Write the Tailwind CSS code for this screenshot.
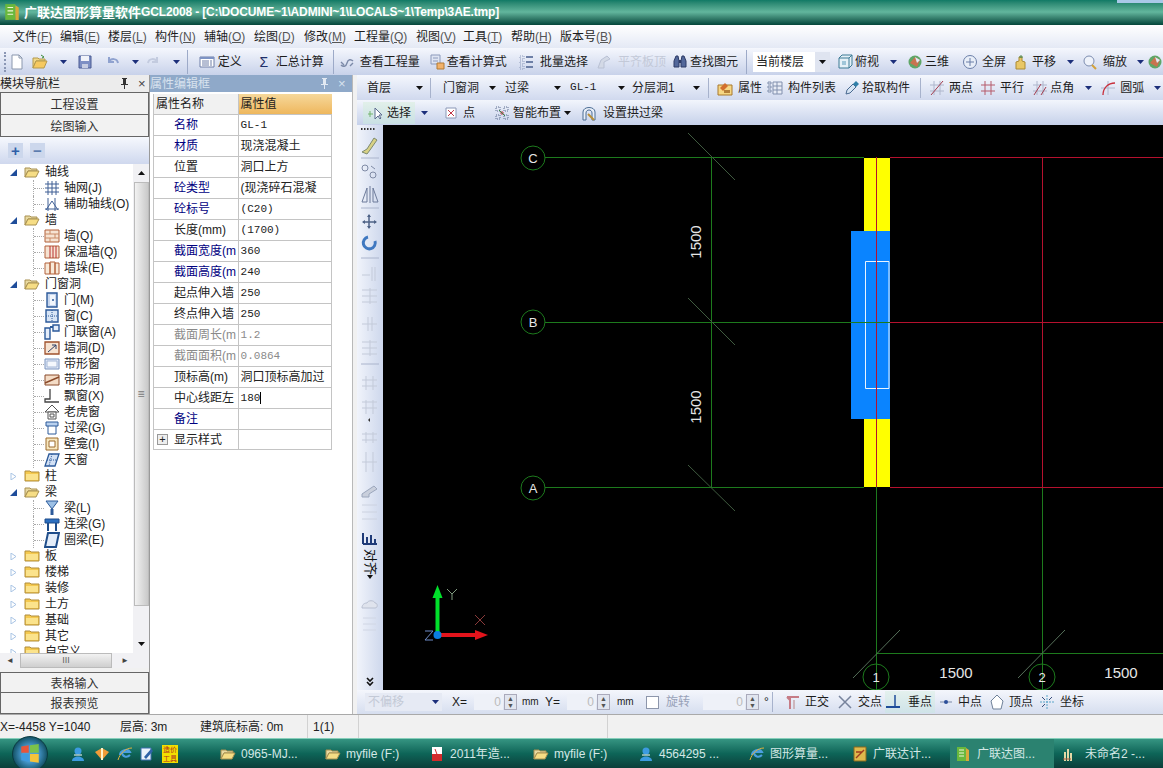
<!DOCTYPE html>
<html lang="zh-CN">
<head>
<meta charset="UTF-8">
<title>广联达图形算量软件GCL2008</title>
<script src="https://cdn.jsdelivr.net/npm/@tailwindcss/browser@4"></script>
</head>
<body class="bg-[#ece9d8]">
<!-- shared icons -->
<svg class="hidden">
  <symbol id="dn" viewBox="0 0 7 4"><path d="M0 0h7L3.5 4z" fill="#1c2f7a"/></symbol>
  <symbol id="dk" viewBox="0 0 7 4"><path d="M0 0h7L3.5 4z" fill="#111"/></symbol>
  <symbol id="pin" viewBox="0 0 9 11"><path d="M2 0h5v1H6v5h2v1H5v4H4V7H1V6h2V1H2z" fill="currentColor"/></symbol>
  <symbol id="fo" viewBox="0 0 16 16"><path d="M1 4h5l1 1h6v2H4L1 13z" fill="#e8d9a0" stroke="#a89050"/><path d="M4 7h11l-3 6H1z" fill="#f6dd85" stroke="#a89050"/></symbol>
  <symbol id="fc" viewBox="0 0 16 16"><path d="M1 3h5l1 1h8v9H1z" fill="#f5c94f" stroke="#b08d3c"/><path d="M2 6h12v6H2z" fill="#fbe38c"/></symbol>
  <symbol id="doc" viewBox="0 0 16 16"><path d="M3 1h7l3 3v11H3z" fill="#fff" stroke="#8a97ad"/><path d="M10 1v3h3" fill="none" stroke="#8a97ad"/></symbol>
  <symbol id="open" viewBox="0 0 16 16"><path d="M1 4h5l1 1h6v2H4L1 14z" fill="#f0d889" stroke="#b59a4c"/><path d="M4 7h11l-3 7H1z" fill="#f6c960" stroke="#b59a4c"/><path d="M9 1l3 2-2 1" fill="none" stroke="#3a8a3a"/></symbol>
  <symbol id="save" viewBox="0 0 16 16"><path d="M2 2h12v12H2z" fill="#7d8fc4" stroke="#4a5a92"/><path d="M4 2h8v5H4z" fill="#f1f3fa"/><path d="M5 10h6v4H5z" fill="#c6cde2"/></symbol>
  <symbol id="undo" viewBox="0 0 16 16"><path d="M4 3v5h5M4 8c2-4 8-4 9 1" fill="none" stroke="#8fa2cf" stroke-width="2"/></symbol>
  <symbol id="redo" viewBox="0 0 16 16"><path d="M12 3v5H7M12 8C10 4 4 4 3 9" fill="none" stroke="#c3cbdf" stroke-width="2"/></symbol>
  <symbol id="def" viewBox="0 0 16 16"><path d="M1 3h14v10H1z" fill="#fff" stroke="#6e7fa8"/><path d="M1 3h14v2H1z" fill="#7d93c4"/><path d="M3 7h7M3 9h7M3 11h7M12 6v6" stroke="#6e7fa8"/></symbol>
  <symbol id="eye" viewBox="0 0 16 16"><path d="M2 11c2 2 5 2 6-2s4-4 6-2M2 8l3 3M11 12l3-3" fill="none" stroke="#7c8aa8" stroke-width="1.4"/></symbol>
  <symbol id="calc" viewBox="0 0 16 16"><path d="M2 1h9v9H2z" fill="#dfe5f3" stroke="#8c9abb"/><path d="M4 4h5M4 7h5" stroke="#8c9abb"/><path d="M8 9h7v6H8z" fill="#f2b26a" stroke="#b27a35"/></symbol>
  <symbol id="batch" viewBox="0 0 16 16"><path d="M2 2h4v3H2zM2 7h4v3H2zM2 12h4v3H2z" fill="none" stroke="#8c9abb" stroke-dasharray="1 1"/><path d="M8 3h7M8 8h7M8 13h7" stroke="#6d7fa6" stroke-width="2"/></symbol>
  <symbol id="flush" viewBox="0 0 16 16"><path d="M2 14l3-8 6-4 3 3-6 3v6z" fill="#d3d9e6" stroke="#b9c1d4"/></symbol>
  <symbol id="bino" viewBox="0 0 16 16"><path d="M2 7l2-5h2l1 5v6H2zM9 7l1-5h2l2 5v6H9z" fill="#52679a" stroke="#2c3a66"/><path d="M7 6h2v3H7z" fill="#2c3a66"/></symbol>
  <symbol id="top" viewBox="0 0 16 16"><path d="M2 4l3-3h10v10l-3 3H2z" fill="#e5f0f7" stroke="#3d7b95"/><path d="M2 4h10v10M12 4l3-3" fill="none" stroke="#3d7b95"/><path d="M5 7h4v4H5z" fill="#9fc5d8"/></symbol>
  <symbol id="d3" viewBox="0 0 16 16"><circle cx="8" cy="8" r="6.5" fill="#5fa667"/><path d="M3 9l5-6 5 3-3 7z" fill="#c9734f"/><path d="M8 3l5 3-3 3z" fill="#dfe9f5"/></symbol>
  <symbol id="full" viewBox="0 0 16 16"><circle cx="8" cy="8" r="6.5" fill="#e8eef8" stroke="#6b7fa8"/><path d="M8 4v8M4 8h8" stroke="#6b7fa8"/></symbol>
  <symbol id="pan" viewBox="0 0 16 16"><path d="M4 15V8l3-1V3h3v4l3 1v7z" fill="#e9c766" stroke="#ab8b36"/><path d="M9 1v3M7 3h4" stroke="#568a50"/></symbol>
  <symbol id="zoom" viewBox="0 0 16 16"><circle cx="7" cy="7" r="5" fill="#eef2fa" stroke="#7d8db0"/><path d="M10 11l4 4" stroke="#d4a23a" stroke-width="2"/></symbol>
  <symbol id="prop" viewBox="0 0 16 16"><path d="M1 5h14v10H1z" fill="#f6d784" stroke="#a8792c"/><path d="M3 8l5-5 3 3-5 5z" fill="#d26f2d"/><path d="M7 10h6v3H7z" fill="#b5803a"/></symbol>
  <symbol id="list" viewBox="0 0 16 16"><path d="M1 2h3v2H1zM1 6h3v2H1zM1 10h3v2H1zM6 2h9v12H6z" fill="#e8ecf5" stroke="#8190ae"/><path d="M6 6h9M6 10h9M10 2v12" stroke="#8190ae"/></symbol>
  <symbol id="pick" viewBox="0 0 16 16"><path d="M2 14l1-4 6-6 3 3-6 6z" fill="#d5e3f3" stroke="#49698f"/><path d="M9 4l3-3 3 3-3 3z" fill="#2f7fa8"/></symbol>
  <symbol id="two" viewBox="0 0 16 16"><path d="M1 5h14M1 11h14M5 1v14M11 1v14" stroke="#aeb6cc"/><path d="M2 15L14 1" stroke="#a33c4e"/></symbol>
  <symbol id="par" viewBox="0 0 16 16"><path d="M1 5h14M1 11h14M5 1v14M11 1v14" stroke="#b55a6a"/></symbol>
  <symbol id="ang" viewBox="0 0 16 16"><path d="M1 5h14M1 11h14M5 1v14M11 1v14" stroke="#aeb6cc"/><path d="M2 15L9 4M9 15l5-8" stroke="#a33c4e"/></symbol>
  <symbol id="arc" viewBox="0 0 16 16"><path d="M1 8h14M8 1v14" stroke="#aeb6cc"/><path d="M3 15C3 8 8 3 15 3" fill="none" stroke="#c8303c" stroke-width="1.4"/></symbol>
  <symbol id="sel" viewBox="0 0 16 16"><path d="M8 3v11l3-3 2 3 1-1-2-3h3z" fill="#fff" stroke="#5d6c8f"/><path d="M1 9h5M3 6v6" stroke="#74b36e"/></symbol>
  <symbol id="pt" viewBox="0 0 16 16"><path d="M3 3h10v10H3z" fill="#fff" stroke="#8b98b6"/><path d="M5 5l6 6M11 5l-6 6" stroke="#c03746"/></symbol>
  <symbol id="smart" viewBox="0 0 16 16"><path d="M2 2h4v4H2zM10 2h4v4h-4zM2 10h4v4H2zM10 10h4v4h-4z" fill="none" stroke="#5d6c8f" stroke-dasharray="1 1"/><path d="M6 8h4M8 6v4" stroke="#c03746"/><path d="M5 5l6 6" stroke="#3c8a48"/></symbol>
  <symbol id="arch" viewBox="0 0 16 16"><path d="M2 7C2 1 14 1 14 7v8h-3V8C11 4 5 4 5 8v7H2z" fill="#e9eff8" stroke="#4a6c93"/><path d="M7 9l6 6" stroke="#b8903a" stroke-width="2"/></symbol>
  <symbol id="ortho" viewBox="0 0 16 16"><path d="M2 3h12M5 3v12M2 3l3 3" fill="none" stroke="#c67c86" stroke-width="2"/><path d="M9 6v9" stroke="#cdb6bd" stroke-width="2"/></symbol>
  <symbol id="cross" viewBox="0 0 16 16"><path d="M2 2l12 12M14 2L2 14" stroke="#77839c" stroke-width="1.5"/></symbol>
  <symbol id="perp" viewBox="0 0 16 16"><path d="M10 1v12" stroke="#1f4d9a" stroke-width="1.5"/><path d="M1 13h14" stroke="#1f4d9a" stroke-width="2"/></symbol>
  <symbol id="mid" viewBox="0 0 16 16"><path d="M2 8h12" stroke="#7a89a6"/><circle cx="8" cy="8" r="2" fill="#2c4f9a"/></symbol>
  <symbol id="apex" viewBox="0 0 16 16"><path d="M8 1l6 6-2 8H4L2 7z" fill="#fff" stroke="#6f8199"/></symbol>
  <symbol id="coord" viewBox="0 0 16 16"><path d="M8 1v14M1 8h14" stroke="#5aa5c9" stroke-dasharray="2 1"/><path d="M3 3l3 3M13 3l-3 3M3 13l3-3" stroke="#394f7d"/></symbol>
  <symbol id="grid" viewBox="0 0 16 16"><path d="M1 4h14M1 8h14M1 12h14M4 1v14M8 1v14M12 1v14" stroke="#3f5f94"/></symbol>
  <symbol id="aux" viewBox="0 0 16 16"><path d="M1 13h14M4 2v13M11 2v13M2 14L8 5l6 9" fill="none" stroke="#3f5f94"/></symbol>
  <symbol id="wall" viewBox="0 0 16 16"><path d="M1 2h14v12H1z" fill="#f6e3d2" stroke="#b2603a"/><path d="M1 6h14M1 10h14M6 2v4M11 6v4M6 10v4" stroke="#c98a66"/></symbol>
  <symbol id="ins" viewBox="0 0 16 16"><path d="M1 2h14v12H1z" fill="#f6e3d2" stroke="#b2603a"/><path d="M6 2v12M9 2v12M12 2v12" stroke="#b72f2f"/></symbol>
  <symbol id="pier" viewBox="0 0 16 16"><path d="M1 3h5v11H1zM6 2h5v12H6zM11 3h4v11h-4z" fill="#f8ead9" stroke="#b2603a"/></symbol>
  <symbol id="door" viewBox="0 0 16 16"><path d="M3 1h10v14H3z" fill="#c9d8ef" stroke="#2c5a9a" stroke-width="1.4"/><path d="M6 3h5v10H6z" fill="#f2f6fc"/><circle cx="9" cy="8" r="1" fill="#2c5a9a"/></symbol>
  <symbol id="win" viewBox="0 0 16 16"><path d="M2 2h12v12H2z" fill="#d8e5f6" stroke="#2c5a9a" stroke-width="1.4"/><path d="M8 2v12M2 8h12" stroke="#2c5a9a" stroke-dasharray="1 1"/></symbol>
  <symbol id="dw" viewBox="0 0 16 16"><path d="M1 4h5v11H1zM9 1h6v6H9z" fill="#e6eefa" stroke="#2c5a9a" stroke-width="1.4"/><path d="M6 3h3" stroke="#2c5a9a" stroke-width="2"/></symbol>
  <symbol id="hole" viewBox="0 0 16 16"><path d="M1 2h14v12H1z" fill="#f6e3d2" stroke="#a0522d" stroke-width="1.3"/><path d="M4 12L12 5M12 5H8M12 5v4" fill="none" stroke="#2d3e66"/></symbol>
  <symbol id="sw" viewBox="0 0 16 16"><path d="M1 3h14v10H1z" fill="#dfe8f7" stroke="#7d95bf"/><path d="M3 5h10v6H3z" fill="#f5f8fd" stroke="#a6b8d6"/></symbol>
  <symbol id="sh" viewBox="0 0 16 16"><path d="M1 3h14v10H1z" fill="#f4dcc6" stroke="#8a4a2a"/><path d="M1 11L15 5" stroke="#8a4a2a" stroke-width="1.4"/></symbol>
  <symbol id="bay" viewBox="0 0 16 16"><path d="M6 1v10H1v3h14" fill="none" stroke="#444" stroke-width="1.3"/></symbol>
  <symbol id="dorm" viewBox="0 0 16 16"><path d="M8 1l7 7H1z" fill="#fff" stroke="#555"/><path d="M4 8h8v7H4z" fill="#fff" stroke="#555"/><path d="M6 10h4v3H6z" fill="none" stroke="#555"/></symbol>
  <symbol id="lin" viewBox="0 0 16 16"><path d="M2 2h12v4H2z" fill="#b8d0ee" stroke="#2c5a9a"/><path d="M4 6v8h8V6" fill="none" stroke="#2c5a9a"/></symbol>
  <symbol id="nic" viewBox="0 0 16 16"><path d="M2 2h12v12H2z" fill="#f7e7bf" stroke="#9b6a2c"/><path d="M5 5h6v6H5z" fill="#fff" stroke="#9b6a2c"/></symbol>
  <symbol id="sky" viewBox="0 0 16 16"><path d="M5 2h10l-4 12H1z" fill="#d3e1f5" stroke="#2c5a9a" stroke-width="1.3"/><path d="M3 8h10M8 2l-3 12" stroke="#2c5a9a" stroke-dasharray="1 1"/></symbol>
  <symbol id="bm" viewBox="0 0 16 16"><path d="M2 1h12L8 9z" fill="#9cc0e6" stroke="#2c5a9a"/><path d="M8 9v6" stroke="#2c5a9a" stroke-width="3"/></symbol>
  <symbol id="lnk" viewBox="0 0 16 16"><path d="M1 3h14v4H1z" fill="#2c6fc0" stroke="#1f4d8a"/><path d="M4 7v8M12 7v8" stroke="#1f4d8a" stroke-width="2"/></symbol>
  <symbol id="ring" viewBox="0 0 16 16"><path d="M4 1h11l-3 14H1z" fill="#e4edf9" stroke="#1f4d8a" stroke-width="2"/></symbol>
  <symbol id="ie" viewBox="0 0 16 16"><path d="M3 9c0-5 8-7 10-3H5c0 5 5 6 8 3" fill="none" stroke="#4c9fe0" stroke-width="2"/><path d="M1 14C3 7 9 2 15 2" fill="none" stroke="#e0b23f"/></symbol>
  <symbol id="qq" viewBox="0 0 16 16"><circle cx="8" cy="5" r="3.5" fill="#3c9be0"/><path d="M2 15c0-6 12-6 12 0z" fill="#3c9be0"/><path d="M4 9h8" stroke="#fff"/></symbol>
  <symbol id="box" viewBox="0 0 16 16"><path d="M1 6l7-4 7 4-7 8z" fill="#ef9c38"/><path d="M8 2v12" stroke="#fff3c9" stroke-width="2"/></symbol>
  <symbol id="edit" viewBox="0 0 16 16"><path d="M2 2h10v12H2z" fill="#eaf2fc" stroke="#3c6fb0"/><path d="M5 11l7-8 2 2-7 8z" fill="#2f62a8"/></symbol>
  <symbol id="pdf" viewBox="0 0 16 16"><path d="M3 1h10v14H3z" fill="#fff"/><path d="M3 8h10v7H3z" fill="#d32c2c"/><path d="M6 3l3 8" stroke="#d32c2c"/></symbol>
  <symbol id="gld" viewBox="0 0 16 16"><path d="M2 1h12v14H2z" fill="#dfb94c" stroke="#8a6a1e"/><path d="M4 12L12 4M4 6h6" stroke="#9e3b1f" stroke-width="1.4"/></symbol>
  <symbol id="gcl" viewBox="0 0 16 16"><path d="M2 1h9v14H2z" fill="#69b83c"/><path d="M11 2l3 2v11h-3z" fill="#d8a93a"/><path d="M4 4h5M4 7h5M4 10h5" stroke="#eef7d8"/></symbol>
  <symbol id="brush" viewBox="0 0 16 16"><path d="M6 15V6M9 15V3M12 15V7" stroke="#e4d9a6" stroke-width="2"/><path d="M4 13h8" stroke="#a8573c"/></symbol>
</svg>

<div class="w-[1163px] h-[768px] overflow-hidden flex flex-col relative font-['Liberation_Sans','Noto_Sans_CJK_SC',sans-serif] text-[12px] text-[#1c1c1c] leading-none">

  <!-- title bar -->
  <div class="h-[25px] shrink-0 flex items-center bg-gradient-to-b from-[#0f7a65] via-[#62b69d] to-[#084f43] border-b border-[#0a4a3e] text-white relative">
    <svg class="w-[18px] h-[18px] ml-[3px]"><use href="#gcl"/></svg>
    <span class="ml-[3px] text-[13px] font-bold whitespace-nowrap">广联达图形算量软件</span><span class="text-[12px] font-bold whitespace-nowrap tracking-[-0.15px]">GCL2008 - [C:\DOCUME~1\ADMINI~1\LOCALS~1\Temp\3AE.tmp]</span>
    <div class="absolute right-0 top-0 w-[46px] h-[3px] bg-[#a9c8e8]"></div>
  </div>

  <!-- menu bar -->
  <div class="h-[23px] shrink-0 flex items-center pl-[13px] bg-gradient-to-b from-white to-[#e4e9f5] text-[12px]">
    <span class="w-[47px]">文件<span class="text-[#555]">(<u>F</u>)</span></span>
    <span class="w-[48px]">编辑<span class="text-[#555]">(<u>E</u>)</span></span>
    <span class="w-[47px]">楼层<span class="text-[#555]">(<u>L</u>)</span></span>
    <span class="w-[49px]">构件<span class="text-[#555]">(<u>N</u>)</span></span>
    <span class="w-[50px]">辅轴<span class="text-[#555]">(<u>O</u>)</span></span>
    <span class="w-[50px]">绘图<span class="text-[#555]">(<u>D</u>)</span></span>
    <span class="w-[50px]">修改<span class="text-[#555]">(<u>M</u>)</span></span>
    <span class="w-[62px]">工程量<span class="text-[#555]">(<u>Q</u>)</span></span>
    <span class="w-[47px]">视图<span class="text-[#555]">(<u>V</u>)</span></span>
    <span class="w-[48px]">工具<span class="text-[#555]">(<u>T</u>)</span></span>
    <span class="w-[49px]">帮助<span class="text-[#555]">(<u>H</u>)</span></span>
    <span class="whitespace-nowrap">版本号<span class="text-[#555]">(<u>B</u>)</span></span>
  </div>

  <!-- main toolbar -->
  <div class="h-[27px] shrink-0 flex items-center whitespace-nowrap bg-gradient-to-b from-[#f5f7fd] to-[#c8d2ea]">
    <span class="ml-1 w-[3px] h-5 border-l-2 border-dotted border-[#8a96b4]"></span>
    <svg class="w-4 h-4 ml-[2px] shrink-0"><use href="#doc"/></svg>
    <svg class="w-4 h-4 ml-[7px] shrink-0"><use href="#open"/></svg>
    <svg class="w-[7px] h-1 ml-[12px] shrink-0"><use href="#dn"/></svg>
    <svg class="w-4 h-4 ml-[10px] shrink-0"><use href="#save"/></svg>
    <svg class="w-4 h-4 ml-[12px] shrink-0"><use href="#undo"/></svg>
    <svg class="w-[7px] h-1 ml-[11px] shrink-0"><use href="#dn"/></svg>
    <svg class="w-4 h-4 ml-[6px] shrink-0"><use href="#redo"/></svg>
    <svg class="w-[7px] h-1 ml-[12px] shrink-0"><use href="#dn"/></svg>
    <span class="ml-[7px] w-px h-6 bg-[#9daac8] shrink-0"></span>
    <svg class="w-4 h-4 ml-[11px] shrink-0"><use href="#def"/></svg><span class="ml-[3px]">定义</span>
    <span class="ml-[14px] w-4 text-center text-[14px] text-[#1f2f6a] shrink-0">Σ</span><span class="ml-1">汇总计算</span>
    <span class="ml-[9px] w-px h-6 bg-[#9daac8] shrink-0"></span>
    <svg class="w-4 h-4 ml-[5px] shrink-0"><use href="#eye"/></svg><span class="ml-[5px]">查看工程量</span>
    <svg class="w-4 h-4 ml-[9px] shrink-0"><use href="#calc"/></svg><span class="ml-[2px]">查看计算式</span>
    <svg class="w-4 h-4 ml-[11px] shrink-0"><use href="#batch"/></svg><span class="ml-[6px]">批量选择</span>
    <svg class="w-4 h-4 ml-[8px] shrink-0"><use href="#flush"/></svg><span class="ml-[6px] text-[#c3c9d8]">平齐板顶</span>
    <svg class="w-4 h-4 ml-[6px] shrink-0"><use href="#bino"/></svg><span class="ml-[2px]">查找图元</span>
    <span class="ml-[8px] w-px h-6 bg-[#9daac8] shrink-0"></span>
    <div class="ml-[6px] w-[77px] h-[20px] bg-white flex items-center pl-[3px] shrink-0">
      <span class="w-[59px]">当前楼层</span>
      <span class="w-[15px] h-[20px] bg-[#dfe4f0] flex items-center justify-center"><svg class="w-[7px] h-1"><use href="#dk"/></svg></span>
    </div>
    <svg class="w-4 h-4 ml-[7px] shrink-0"><use href="#top"/></svg><span class="ml-[2px]">俯视</span>
    <svg class="w-[7px] h-1 ml-[11px] shrink-0"><use href="#dn"/></svg>
    <svg class="w-4 h-4 ml-[10px] shrink-0"><use href="#d3"/></svg><span class="ml-[2px]">三维</span>
    <svg class="w-4 h-4 ml-[13px] shrink-0"><use href="#full"/></svg><span class="ml-1">全屏</span>
    <svg class="w-4 h-4 ml-[6px] shrink-0"><use href="#pan"/></svg><span class="ml-1">平移</span>
    <svg class="w-[7px] h-1 ml-[11px] shrink-0"><use href="#dn"/></svg>
    <svg class="w-4 h-4 ml-[8px] shrink-0"><use href="#zoom"/></svg><span class="ml-[5px]">缩放</span>
    <svg class="w-[7px] h-1 ml-[10px] shrink-0"><use href="#dn"/></svg>
    <svg class="w-4 h-4 ml-[3px] shrink-0"><use href="#d3"/></svg>
  </div>

  <!-- workspace -->
  <div class="h-[639px] shrink-0 flex bg-[#f1f1f1]">

    <!-- module navigation -->
    <div class="w-[150px] shrink-0 flex flex-col border-r border-[#9a9a9a]">
      <div class="h-[17px] flex items-center bg-[#ececec] whitespace-nowrap">
        <span class="w-[120px]">模块导航栏</span>
        <svg class="w-[9px] h-[11px] mr-[9px] text-[#333]"><use href="#pin"/></svg>
        <span class="text-[13px] text-[#444]">×</span>
      </div>
      <div class="h-[23px] pt-[2px] flex items-center justify-center bg-[#f2f2f2] border border-[#666] text-[#333]">工程设置</div>
      <div class="h-[22px] pt-[2px] flex items-center justify-center bg-[#f2f2f2] border border-t-0 border-[#666] text-[#333]">绘图输入</div>
      <div class="h-[27px] flex items-center gap-[7px] pl-[8px] bg-gradient-to-b from-[#f6f8fd] to-[#cfd8ee]">
        <span class="w-[15px] h-[15px] bg-[#ccd7ec] text-[#2f5fa8] font-bold text-[15px] flex items-center justify-center">+</span>
        <span class="w-[15px] h-[15px] bg-[#ccd7ec] text-[#5c7cae] font-bold text-[15px] flex items-center justify-center">−</span>
      </div>
      <div class="h-[489px] flex shadow-[inset_1px_0_0_#888]">
        <div id="tree" class="w-[133px] h-[489px] overflow-hidden bg-white"></div>
        <div class="w-[16px] h-[489px] flex flex-col items-center bg-[#f1f1f4]">
          <svg class="w-[7px] h-1 mt-[7px] rotate-180"><use href="#dk"/></svg>
          <div class="mt-[7px] w-[15px] h-[424px] bg-gradient-to-r from-[#f2f2f2] to-[#c9c9c9] border border-[#bbb] flex items-center justify-center text-[#777]">≡</div>
          <svg class="w-[7px] h-1 mt-[36px]"><use href="#dk"/></svg>
        </div>
      </div>
      <div class="h-[15px] w-[149px] flex items-center bg-[#f1f1f4]">
        <span class="ml-[6px] text-[8px] text-[#444] w-[14px]">◄</span>
        <div class="w-[92px] h-[15px] bg-gradient-to-b from-[#f2f2f2] to-[#cfcfcf] border border-[#bbb] flex items-center justify-center text-[9px] text-[#666]">III</div>
        <span class="ml-[9px] text-[8px] text-[#444]">►</span>
      </div>
      <div class="mt-[4px] h-[21px] pt-[2px] flex items-center justify-center bg-[#f2f2f2] border border-[#666] text-[#333]">表格输入</div>
      <div class="h-[21px] pt-[2px] flex items-center justify-center bg-[#f2f2f2] border border-t-0 border-[#666] text-[#333]">报表预览</div>
    </div>

    <!-- property editor -->
    <div class="w-[203px] shrink-0 flex flex-col bg-white border-r border-[#b9b9b9]">
      <div class="h-[17px] flex items-center bg-[#8fa9c9] text-[#d8e2ee] whitespace-nowrap">
        <span class="w-[170px]">属性编辑框</span>
        <svg class="w-[9px] h-[11px] mr-[9px] text-[#e2e9f2]"><use href="#pin"/></svg>
        <span class="text-[13px]">×</span>
      </div>
      <div id="props" class="ml-[3px] mt-[2px] w-[179px] border-l border-[#c4c4c4]"></div>
    </div>

    <!-- drawing area -->
    <div class="w-[806px] ml-[4px] shrink-0 flex flex-col">
      <div class="h-[25px] shrink-0 flex items-center whitespace-nowrap bg-gradient-to-b from-[#f5f7fd] to-[#d0d9ee]">
        <span class="ml-[10px]">首层</span>
        <svg class="w-[7px] h-1 ml-[25px] shrink-0"><use href="#dk"/></svg>
        <span class="ml-[7px] w-px h-5 bg-[#a7b2cc] shrink-0"></span>
        <span class="ml-[12px]">门窗洞</span>
        <svg class="w-[7px] h-1 ml-[10px] shrink-0"><use href="#dk"/></svg>
        <span class="ml-[9px]">过梁</span>
        <svg class="w-[7px] h-1 ml-[25px] shrink-0"><use href="#dk"/></svg>
        <span class="ml-[9px] w-[22px] font-['Liberation_Mono'] text-[11px]">GL-1</span>
        <svg class="w-[7px] h-1 ml-[26px] shrink-0"><use href="#dk"/></svg>
        <span class="ml-[7px] w-[44px]">分层洞1</span>
        <svg class="w-[7px] h-1 ml-[17px] shrink-0"><use href="#dk"/></svg>
        <span class="ml-[8px] w-px h-5 bg-[#a7b2cc] shrink-0"></span>
        <svg class="w-4 h-4 ml-[8px] shrink-0"><use href="#prop"/></svg><span class="ml-[5px]">属性</span>
        <svg class="w-4 h-4 ml-[5px] shrink-0"><use href="#list"/></svg><span class="ml-[5px]">构件列表</span>
        <svg class="w-4 h-4 ml-[8px] shrink-0"><use href="#pick"/></svg><span class="ml-[2px]">拾取构件</span>
        <span class="ml-[10px] w-px h-5 bg-[#a7b2cc] shrink-0"></span>
        <svg class="w-4 h-4 ml-[8px] shrink-0"><use href="#two"/></svg><span class="ml-1">两点</span>
        <svg class="w-4 h-4 ml-[7px] shrink-0"><use href="#par"/></svg><span class="ml-1">平行</span>
        <svg class="w-4 h-4 ml-[8px] shrink-0"><use href="#ang"/></svg><span class="ml-[2px]">点角</span>
        <svg class="w-[7px] h-1 ml-[11px] shrink-0"><use href="#dn"/></svg>
        <svg class="w-4 h-4 ml-[8px] shrink-0"><use href="#arc"/></svg><span class="ml-1">圆弧</span>
        <svg class="w-[7px] h-1 ml-[10px] shrink-0"><use href="#dn"/></svg>
      </div>
      <div class="h-[25px] shrink-0 flex items-center whitespace-nowrap bg-gradient-to-b from-[#f2f5fc] to-[#c6d1ea]">
        <div class="ml-[6px] w-[52px] h-[22px] flex items-center bg-gradient-to-b from-[#e2f0ea] to-[#c9e0e4] shrink-0">
          <svg class="w-4 h-4 ml-1"><use href="#sel"/></svg><span class="ml-1">选择</span>
        </div>
        <svg class="w-[7px] h-1 ml-[6px] shrink-0"><use href="#dn"/></svg>
        <svg class="w-4 h-4 ml-[15px] shrink-0"><use href="#pt"/></svg><span class="ml-1">点</span>
        <svg class="w-4 h-4 ml-[19px] shrink-0"><use href="#smart"/></svg><span class="ml-[3px]">智能布置</span>
        <svg class="w-[7px] h-1 ml-[3px] shrink-0"><use href="#dk"/></svg>
        <svg class="w-4 h-4 ml-[10px] shrink-0"><use href="#arch"/></svg><span class="ml-[6px]">设置拱过梁</span>
      </div>

      <div class="h-[565px] shrink-0 flex">
        <!-- vertical tool strip -->
        <div class="w-[26px] shrink-0 bg-gradient-to-r from-[#f1f4fb] to-[#cdd7ec]">
          <svg class="w-[26px] h-[565px]" viewBox="357 125 26 565">
            <path d="M361 129h15" stroke="#333" stroke-dasharray="1.5 1.5" stroke-width="2"/>
            <path d="M362 152l5-3 7-11 3 2-7 10-3 4z" fill="#d8d184" stroke="#7d8a70"/>
            <path d="M361 158h18M361 208h18M361 258h18M361 364h18" stroke="#aab4cc"/>
            <circle cx="365" cy="168" r="3" fill="none" stroke="#7f8aa5"/><circle cx="373" cy="175" r="3" fill="none" stroke="#7f8aa5"/><path d="M371 166l4 3" stroke="#7f8aa5"/>
            <path d="M362 202l5-14v14zM378 202l-5-14v14zM370 186v17" fill="none" stroke="#6d7b9a"/>
            <path d="M369 215v13M363 222h13" stroke="#4f6387" stroke-width="1.5"/><path d="M369 214l-2 3h4zM369 229l-2-3h4zM362 222l3-2v4zM377 222l-3-2v4z" fill="#4f6387"/>
            <path d="M375 241a6 6 0 1 1-7-4" fill="none" stroke="#3f78c0" stroke-width="3"/>
            <path d="M362 275h8M372 267v14M375 267v14M362 290h15M362 296h15M362 302h15M370 288v16M362 324h15M368 317v14M372 317v14M362 342h15M362 348h15M362 354h15M370 340v16M362 380h15M362 386h15M366 376v14M373 376v14M362 402h15M362 408h15M366 400v14M373 400v14M362 434h15M362 440h15M366 432v11M373 432v11M366 452v20M373 452v20M362 462h15" stroke="#c3cad9"/>
            <path d="M370 418l-2 2 2 2z" fill="#333"/>
            <path d="M362 494l12-8 3 3-8 5v3h-7z" fill="#c9cfdc" stroke="#9ba6bc"/><path d="M362 505h15M362 512h15M362 519h15" stroke="#ccd2e0"/>
            <path d="M363 544v-11M363 544h14M367 544v-7M371 544v-9M375 544v-5" stroke="#1f3b78" stroke-width="2" fill="none"/>
            <text x="370" y="549" transform="rotate(90 370 549)" font-size="13" fill="#111" dominant-baseline="middle" font-family="Noto Sans CJK SC">对齐</text>
            <path d="M367 575h6l-3 4z" fill="#111"/>
            <path d="M362 608c0-4 3-5 5-5 1-3 7-3 8 0 3 0 3 5 0 5z" fill="#dfe3ed" stroke="#b9c0d1"/>
            <path d="M363 618h13M363 624h13M363 630h13" stroke="#d0d6e4"/>
            <path d="M371 678l-3 3-3-3M371 682l-3 3-3-3" transform="translate(2 0)" fill="none" stroke="#111" stroke-width="1.6"/>
          </svg>
        </div>
        <!-- canvas -->
        <svg class="w-[780px] h-[565px] bg-black shrink-0" viewBox="383 125 780 565">
          <g fill="none" stroke="#1d7a1d">
            <path d="M545 157.5H864M545 322.5H851M545 487.5H864"/>
            <path d="M711.5 157V488"/>
            <path d="M688 133l47 47M688 298l47 47M688 465l47 46" stroke="#3f5a3f"/>
            <circle cx="533" cy="158" r="12"/><circle cx="533" cy="322" r="12"/><circle cx="533" cy="488" r="12"/>
            <path d="M876.5 487V690M1042.5 487V690M876 653.5H1163"/>
            <path d="M853 678l47-48M1018 678l47-48" stroke="#56705a"/>
            <circle cx="876" cy="677" r="13"/><circle cx="1042" cy="677" r="13"/>
          </g>
          <path d="M864 158h26v329h-26z" fill="#ffff00"/>
          <path d="M851 231h39v188h-39z" fill="#0a84ff"/>
          <path d="M865.5 261.5h23.5v127h-23.5z" fill="none" stroke="#e8f4ff"/>
          <g fill="none" stroke="#b5112e">
            <path d="M890 157.5H1163M890 322.5H1163M890 487.5H1163M1042.5 157V487M876.5 157V487"/>
          </g>
          <path d="M851 322.5h39" stroke="#1d7a1d"/>
          <g fill="#e8e8e8" font-family="Liberation Sans" font-size="13" text-anchor="middle">
            <text x="533" y="163">C</text><text x="533" y="327">B</text><text x="533" y="493">A</text>
            <text x="876" y="682">1</text><text x="1042" y="682">2</text>
          </g>
          <g fill="#e6e6e6" font-family="Liberation Sans" font-size="15" text-anchor="middle">
            <text transform="translate(701 242) rotate(-90)">1500</text>
            <text transform="translate(701 407) rotate(-90)">1500</text>
            <text x="956" y="678">1500</text><text x="1121" y="678">1500</text>
          </g>
          <!-- axis gizmo -->
          <path d="M437.5 635V596" stroke="#00e02a" stroke-width="4"/><path d="M437.5 585l-5 13h10z" fill="#00e02a"/>
          <path d="M437 635h40" stroke="#e3141c" stroke-width="4"/><path d="M488 635l-13-5v10z" fill="#e3141c"/>
          <circle cx="437.5" cy="635" r="4" fill="#0a7de0"/>
          <path d="M425 631h8l-8 9h8" fill="none" stroke="#6f8cc8"/>
          <path d="M447 589l5 5 5-5M452 594v6" fill="none" stroke="#7f9a7f"/>
          <path d="M475 615l10 10M485 615l-10 10" stroke="#8a3a3a"/>
        </svg>
      </div>

      <!-- snap bar -->
      <div class="h-[24px] shrink-0 flex items-center whitespace-nowrap bg-gradient-to-b from-[#f4f6fc] to-[#d6deef]">
        <div class="ml-[8px] w-[77px] h-[18px] flex items-center justify-between px-[3px] bg-[#e6eaf4] text-[#c3c9d6] shrink-0"><span>不偏移</span><svg class="w-[7px] h-1"><use href="#dn"/></svg></div>
        <span class="ml-[10px] w-[15px]">X=</span>
        <span class="ml-[7px] w-[29px] h-[16px] bg-[#eef1f8] text-right text-[#bbb] pr-[2px] leading-[16px]">0</span>
        <span class="ml-px w-[13px] h-[16px] bg-[#e1e5ef] border border-[#aab] text-[7px] text-center text-[#555] leading-[7px]">▲<br>▼</span>
        <span class="ml-[5px] w-[16px] text-[10px]">mm</span>
        <span class="ml-[7px] w-[15px]">Y=</span>
        <span class="ml-[7px] w-[29px] h-[16px] bg-[#eef1f8] text-right text-[#bbb] pr-[2px] leading-[16px]">0</span>
        <span class="ml-px w-[13px] h-[16px] bg-[#e1e5ef] border border-[#aab] text-[7px] text-center text-[#555] leading-[7px]">▲<br>▼</span>
        <span class="ml-[7px] w-[16px] text-[10px]">mm</span>
        <span class="ml-[13px] w-[13px] h-[13px] bg-white border border-[#8d96ab] shrink-0"></span>
        <span class="ml-[7px] text-[#98a1b8]">旋转</span>
        <span class="ml-[13px] w-[42px] h-[16px] bg-[#eef1f8] text-right text-[#bbb] pr-[2px] leading-[16px]">0</span>
        <span class="ml-px w-[13px] h-[16px] bg-[#e1e5ef] border border-[#aab] text-[7px] text-center text-[#555] leading-[7px]">▲<br>▼</span>
        <span class="ml-[5px] w-[4px]">°</span>
        <span class="ml-[4px] w-px h-5 bg-[#a7b2cc] shrink-0"></span>
        <svg class="w-4 h-4 ml-[12px] shrink-0"><use href="#ortho"/></svg><span class="ml-1">正交</span>
        <svg class="w-4 h-4 ml-[8px] shrink-0"><use href="#cross"/></svg><span class="ml-[5px]">交点</span>
        <div class="ml-[3px] w-[50px] h-[22px] flex items-center bg-gradient-to-b from-[#e4f1ee] to-[#cfe3e8] shrink-0">
          <svg class="w-4 h-4"><use href="#perp"/></svg><span class="ml-[7px]">垂点</span>
        </div>
        <svg class="w-4 h-4 ml-[3px] shrink-0"><use href="#mid"/></svg><span class="ml-1">中点</span>
        <svg class="w-4 h-4 ml-[7px] shrink-0"><use href="#apex"/></svg><span class="ml-1">顶点</span>
        <svg class="w-4 h-4 ml-[6px] shrink-0"><use href="#coord"/></svg><span class="ml-[5px]">坐标</span>
      </div>
    </div>
  </div>

  <!-- status bar -->
  <div class="h-[24px] shrink-0 flex items-center whitespace-nowrap bg-[#f1f1f1] border-t border-[#a9a9a9] text-[#222]">
    <span class="w-[120px]">X=-4458 Y=1040</span>
    <span class="w-[80px]">层高: 3m</span>
    <span class="w-[107px]">建筑底标高: 0m</span>
    <span class="w-[51px] h-full flex items-center pl-[5px] border-l border-[#d2d2d2]">1(1)</span>
    <span class="w-[249px] h-full border-l border-[#d2d2d2]"></span>
    <span class="h-full border-l border-[#d2d2d2]"></span>
  </div>

  <!-- windows taskbar -->
  <div class="h-[30px] shrink-0 flex items-center whitespace-nowrap bg-gradient-to-b from-[#359582] via-[#0d6558] to-[#0b3f3a] border-t border-[#86cfba] text-[#d4e8e6] relative">
    <span class="ml-[12px] w-[36px] h-[36px] rounded-full bg-[radial-gradient(circle,#4c9fd8_30%,#0f4c5c_75%)] border border-[#0a3a40] shrink-0 flex items-center justify-center">
      <svg class="w-5 h-5" viewBox="0 0 16 16"><path d="M1 2l6-1v6H1z" fill="#e8553a"/><path d="M8 1l7-1v7H8z" fill="#7cc24a"/><path d="M1 8h6v6l-6-1z" fill="#3f9be0"/><path d="M8 8h7v7l-7-1z" fill="#f5c33b"/></svg>
    </span>
    <svg class="w-4 h-4 ml-[22px] shrink-0"><use href="#qq"/></svg>
    <svg class="w-4 h-4 ml-[8px] shrink-0"><use href="#box"/></svg>
    <svg class="w-4 h-4 ml-[7px] shrink-0"><use href="#ie"/></svg>
    <svg class="w-4 h-4 ml-[6px] shrink-0"><use href="#edit"/></svg>
    <span class="ml-[7px] w-4 h-[18px] bg-[#f2e000] text-[#b03020] text-[7px] leading-[9px] text-center shrink-0">造价<br>工具</span>
    <div class="ml-[42px] w-[105px] flex items-center shrink-0"><svg class="w-4 h-4"><use href="#fo"/></svg><span class="ml-[5px]">0965-MJ...</span></div>
    <div class="w-[104px] flex items-center shrink-0"><svg class="w-4 h-4"><use href="#fo"/></svg><span class="ml-[5px]">myfile (F:)</span></div>
    <div class="w-[104px] flex items-center shrink-0"><svg class="w-4 h-4"><use href="#pdf"/></svg><span class="ml-[5px]">2011年造...</span></div>
    <div class="w-[105px] flex items-center shrink-0"><svg class="w-4 h-4"><use href="#fo"/></svg><span class="ml-[5px]">myfile (F:)</span></div>
    <div class="w-[111px] flex items-center shrink-0"><svg class="w-4 h-4"><use href="#qq"/></svg><span class="ml-[5px]">4564295 ...</span></div>
    <div class="w-[103px] flex items-center shrink-0"><svg class="w-4 h-4"><use href="#ie"/></svg><span class="ml-[5px]">图形算量...</span></div>
    <div class="w-[98px] flex items-center shrink-0"><svg class="w-4 h-4"><use href="#gld"/></svg><span class="ml-[5px]">广联达计...</span></div>
    <div class="w-[104px] h-[29px] flex items-center pl-[5px] mr-[5px] bg-[#2b8270] shrink-0"><svg class="w-4 h-4"><use href="#gcl"/></svg><span class="ml-[6px]">广联达图...</span></div>
    <div class="flex items-center shrink-0"><svg class="w-4 h-4"><use href="#brush"/></svg><span class="ml-[10px]">未命名2 -...</span></div>
  </div>
</div>

<script>
// tree rows: [level, icon, text, open]
const treeRows = [
  [0,'fo','轴线',1],[1,'grid','轴网(J)'],[1,'aux','辅助轴线(O)'],
  [0,'fo','墙',1],[1,'wall','墙(Q)'],[1,'ins','保温墙(Q)'],[1,'pier','墙垛(E)'],
  [0,'fo','门窗洞',1],[1,'door','门(M)'],[1,'win','窗(C)'],[1,'dw','门联窗(A)'],[1,'hole','墙洞(D)'],
  [1,'sw','带形窗'],[1,'sh','带形洞'],[1,'bay','飘窗(X)'],[1,'dorm','老虎窗'],[1,'lin','过梁(G)'],[1,'nic','壁龛(I)'],[1,'sky','天窗'],
  [0,'fc','柱',0],[0,'fo','梁',1],[1,'bm','梁(L)'],[1,'lnk','连梁(G)'],[1,'ring','圈梁(E)'],
  [0,'fc','板',0],[0,'fc','楼梯',0],[0,'fc','装修',0],[0,'fc','土方',0],[0,'fc','基础',0],[0,'fc','其它',0],[0,'fc','自定义',0],
];
document.getElementById('tree').innerHTML = treeRows.map(([lv, icon, text, open]) => {
  if (lv) {
    return `<div class="h-4 flex items-center whitespace-nowrap"><span class="ml-[33px] w-[11px] h-4 flex items-center border-l border-dotted border-[#aaa]"><span class="w-full border-t border-dotted border-[#aaa]"></span></span><svg class="w-4 h-4 shrink-0"><use href="#${icon}"/></svg><span class="ml-1 text-[#222]">${text}</span></div>`;
  }
  const arrow = open
    ? '<path d="M0 7h7V0z" fill="#1f4d9a"/>'
    : '<path d="M1 0l5 3.5L1 7z" fill="#fff" stroke="#a8c4e4"/>';
  return `<div class="h-4 flex items-center whitespace-nowrap"><svg class="ml-[10px] w-[7px] h-[7px] shrink-0" viewBox="0 0 7 7">${arrow}</svg><svg class="ml-[7px] w-4 h-4 shrink-0"><use href="#${icon}"/></svg><span class="ml-[5px] text-[#222]">${text}</span></div>`;
}).join('');

// property grid: [name, value, name colour]
const N = 'text-[#00007f]', K = 'text-[#222]', G = 'text-[#8a8a8a]';
const propRows = [
  ['名称','GL-1',N],['材质','现浇混凝土',N],['位置','洞口上方',K],['砼类型','(现浇碎石混凝',N],['砼标号','(C20)',N],
  ['长度(mm)','(1700)',K],['截面宽度(m','360',N],['截面高度(m','240',N],['起点伸入墙','250',K],['终点伸入墙','250',K],
  ['截面周长(m','1.2',G],['截面面积(m','0.0864',G],['顶标高(m)','洞口顶标高加过',K],['中心线距左','180',K],['备注','',N],['显示样式','',K],
];
const head = `<div class="h-[20px] flex"><span class="w-[85px] flex items-center pl-[2px] bg-[#f1f1f1] border-r border-[#c4c4c4]">属性名称</span><span class="w-[94px] flex items-center pl-[2px] bg-gradient-to-b from-[#f6d89a] to-[#eeb75c]">属性值</span></div>`;
document.getElementById('props').innerHTML = head + propRows.map(([name, value, color], i) => {
  const mono = /^[\d.(GL]/.test(value) && !/[\u4e00-\u9fa5]/.test(value);
  const expander = i === 15 ? '<span class="absolute left-[3px] top-[4px] w-[11px] h-[11px] bg-[#eee] border border-[#999] text-[11px] leading-[9px] text-center">+</span>' : '';
  const cursor = i === 13 ? '<span class="inline-block w-px h-[12px] bg-black align-middle"></span>' : '';
  return `<div class="h-[21px] flex border-t border-[#c4c4c4] ${i === 15 ? 'border-b' : ''}"><span class="relative w-[85px] flex items-center pl-[20px] overflow-hidden whitespace-nowrap bg-white border-r border-[#c4c4c4] ${color}">${expander}${name}</span><span class="w-[94px] flex items-center pl-[2px] overflow-hidden whitespace-nowrap border-r border-[#c4c4c4] ${color === G ? G : K} ${mono ? "font-['Liberation_Mono'] text-[11px]" : ''}">${value}${cursor}</span></div>`;
}).join('');
</script>
</body>
</html>
